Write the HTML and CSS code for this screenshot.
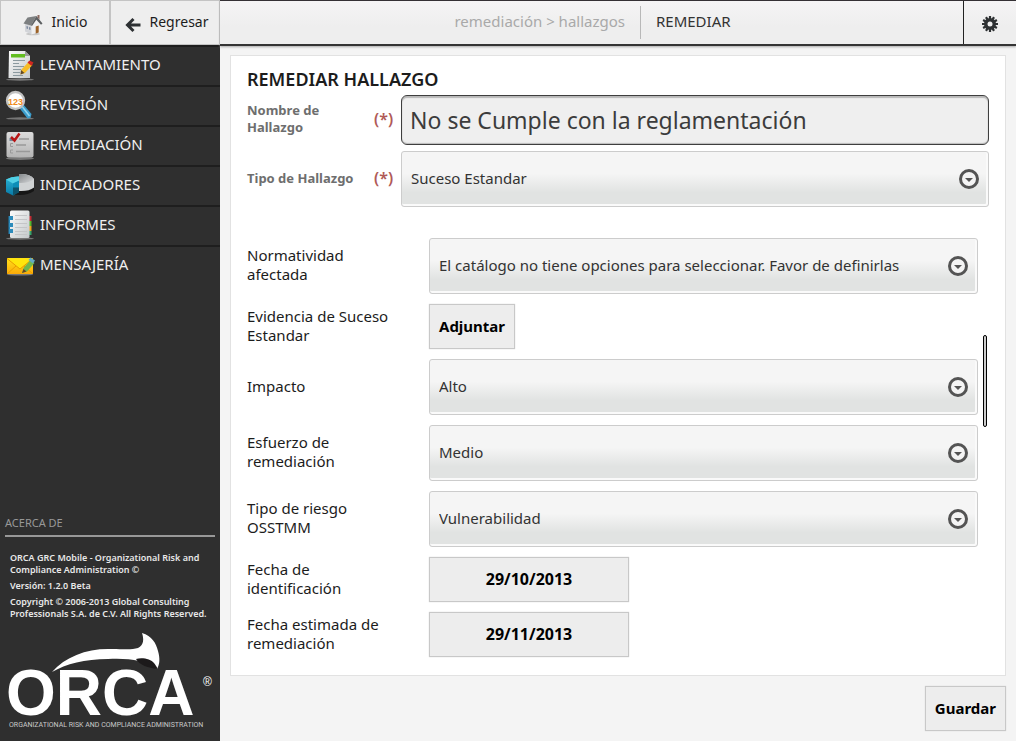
FILE: index.html
```html
<!DOCTYPE html>
<html lang="es">
<head>
<meta charset="utf-8">
<meta name="viewport" content="width=device-width, initial-scale=1">
<title>ORCA GRC Mobile - Remediar hallazgo</title>
<link rel="stylesheet" href="styles.css">
</head>
<body>
<svg class="defs" width="0" height="0" aria-hidden="true">
  <defs>
    <linearGradient id="paper" x1="0" y1="0" x2="1" y2="1"><stop offset="0" stop-color="#fbfbfb"/><stop offset="1" stop-color="#c4c8ca"/></linearGradient>
    <linearGradient id="board" x1="0" y1="0" x2="0" y2="1"><stop offset="0" stop-color="#dcdcdc"/><stop offset="1" stop-color="#b4b4b4"/></linearGradient>
    <linearGradient id="blue" x1="0" y1="0" x2="0" y2="1"><stop offset="0" stop-color="#2cb4d4"/><stop offset="1" stop-color="#087aa8"/></linearGradient>
    <linearGradient id="silver" x1="0" y1="0" x2="1" y2="1"><stop offset="0" stop-color="#85898c"/><stop offset="1" stop-color="#d8dadb"/></linearGradient>
    <linearGradient id="gold" x1="0" y1="0" x2="0" y2="1"><stop offset="0" stop-color="#ffe21a"/><stop offset="1" stop-color="#fbaa09"/></linearGradient>
    <symbol id="chevron" viewBox="0 0 20 20"><circle cx="10" cy="10" r="8.5" fill="#f4f4f4" stroke="#545454" stroke-width="3"/><path d="M6 9h8l-4 4z" fill="#545454"/></symbol>
  </defs>
</svg>
<div class="app">
  <aside class="sidebar">
    <div class="top-buttons">
      <button type="button" class="top-button">
        <svg width="20" height="22" viewBox="0 0 20 22" aria-hidden="true"><ellipse cx="10" cy="20" rx="7" ry="1.3" fill="#c6c6c6"/><path d="M2 9v8.500l7 3V10z" fill="#d2d4d8"/><path d="M8.500 12l5-7 4.500 6v6.500l-9.500 3z" fill="#f0f0f0"/><path d="M.5 9.500L4.500 3.500l9-1.500L8 11.500z" fill="#7c7f80"/><path d="M13.500 2l6 7.500-1.500 1.300-4.700-5L9 12l-1-.7z" fill="#5d6062"/><path d="M12.700 12.500l3-1v7l-3 1z" fill="#9c6228"/><path d="M3.500 12l1.500.5v2.500l-1.500-.5zM6 13l1.500.5V16L6 15.500z" fill="#7e8ba0"/><path d="M14.500 1h2v4.500l-2-2z" fill="#8a6a60"/></svg>
        <span>Inicio</span>
      </button>
      <button type="button" class="top-button">
        <svg width="16" height="16" viewBox="0 0 16 16" aria-hidden="true"><path d="M8.500 2l-6 6 6 6M3 8h12.500" fill="none" stroke="#2d3033" stroke-width="3"/></svg>
        <span>Regresar</span>
      </button>
    </div>
    <nav class="menu" aria-label="Principal">
      <a href="#levantamiento">
        <svg viewBox="0 0 30 32" aria-hidden="true"><ellipse cx="15" cy="29.500" rx="14" ry="1.200" fill="#777"/><path d="M4 1h16l5 5v22H3.500z" fill="url(#paper)"/><path d="M20 1v5h5z" fill="#999"/><path d="M6 4h14v3.500H6z" fill="#62bd20"/><path d="M8 10.500h12M8 13.500h6M8 16.500h11M8 19.500h8M8 22.500h7M8 25.500h10" stroke="#8b999f"/><path d="M15.500 24.500l1-5 7-7.500 4 3-7.500 8z" fill="#f7bd27"/><path d="M22.500 12.500l2-2 4 2-2 3.500z" fill="#cf2721"/><path d="M16 20l3.500 3-4 1.500z" fill="#5d472c"/></svg>
        <span>LEVANTAMIENTO</span></a>
      <a href="#revision">
        <svg viewBox="0 0 30 32" aria-hidden="true"><ellipse cx="15" cy="28.500" rx="14" ry="1.200" fill="#777"/><path d="M14 17.500l4-3.500 8.500 10-1 4-3 .5z" fill="#3b9ccb"/><path d="M17.500 17l7 9" stroke="#93d4ee" stroke-width="1.500"/><circle cx="10.500" cy="10.500" r="8.500" fill="#fff" stroke="#c2c2c2" stroke-width="2.400"/><text x="3" y="14.500" class="digits">123</text></svg>
        <span>REVISIÓN</span></a>
      <a href="#remediacion">
        <svg viewBox="0 0 30 32" aria-hidden="true"><ellipse cx="15" cy="28.500" rx="14" ry="1.500" fill="#777"/><rect x="1.500" y="2" width="27" height="25.500" rx="2" fill="url(#board)"/><path d="M14 9h10M11 15h10M11 21.500h14" stroke="#999" stroke-width="1.500"/><path d="M8 13.500H5.500v3H8M8 20H5.500v3H8" fill="none" stroke="#999"/><path d="M4.500 8H10v3H4.500z" fill="#72899b"/><path d="M6 7l3.500 3.500L14.500 3.500" fill="none" stroke="#b91515" stroke-width="2.500"/></svg>
        <span>REMEDIACIÓN</span></a>
      <a href="#indicadores">
        <svg viewBox="0 0 30 32" aria-hidden="true"><path d="M7 21l22-3v3q-9 6-22 3z" fill="#161616"/><path d="M1 9.500q6-3.500 13.500-3v14L8 25.500 1 22z" fill="url(#blue)"/><path d="M1 9.500q6-3.500 13.500-3v4L8 13.500z" fill="#50cfe5"/><path d="M8 13.500l6.500-3v10L8 25.500z" fill="#0c8db7"/><path d="M14 4q11-.5 15 5v8.500q-5 4-15 3.500z" fill="#d0d3d4"/><path d="M14 4q11-.5 15 5-5 4.500-15 4z" fill="url(#silver)"/><path d="M8 17.500h6v5l-6 3z" fill="#0d536b"/></svg>
        <span>INDICADORES</span></a>
      <a href="#informes">
        <svg viewBox="0 0 30 32" aria-hidden="true"><ellipse cx="15" cy="28.500" rx="14" ry="1.200" fill="#777"/><path d="M24 6h2.500v5H24z" fill="#c12b32"/><path d="M24 11h2.500v5H24z" fill="#56b62c"/><path d="M24 16h2.500v5H24z" fill="#efa21c"/><path d="M24 21h2.500v4H24z" fill="#35a46a"/><path d="M3.500 6H8v18H3.500z" fill="#2382b4"/><rect x="5" y=".5" width="19.500" height="27.500" rx="1.500" fill="url(#paper)"/><path d="M10 5.500h12M10 9.500h12M10 13.500h12M10 17.500h12M10 21.500h12M10 24.500h12" stroke="#c4c5c7"/><path d="M4 6h4v4H4zM4 13h4v4H4zM4 19h4v4H4z" fill="#2d8bbb"/></svg>
        <span>INFORMES</span></a>
      <a href="#mensajeria">
        <svg viewBox="0 0 30 32" aria-hidden="true"><ellipse cx="15" cy="24.500" rx="13" ry="1" fill="#777"/><rect x="2" y="8" width="26" height="16" rx="1" fill="url(#gold)"/><path d="M2 8.500h26L15 19z" fill="#ffe60c"/><path d="M2 24l9-8M28 24l-9-8M2 8.500L15 19 28 8.500" stroke="#e99c00" fill="none"/><path d="M17 23l1.500-5 7-8 4 3-7.500 8.500z" fill="#70b84d"/><path d="M23.500 10l2-2.500 4.500 3-2 3z" fill="#62a9c4"/><path d="M17 23l1.500-4 3 2.500z" fill="#6a4625"/></svg>
        <span>MENSAJERÍA</span></a>
    </nav>
    <section class="about">
      <h2>ACERCA DE</h2>
      <div class="about-text">
        <p>ORCA GRC Mobile - Organizational Risk and Compliance Administration ©</p>
        <p>Versión: 1.2.0 Beta</p>
        <p>Copyright © 2006-2013 Global Consulting Professionals S.A. de C.V. All Rights Reserved.</p>
      </div>
      <svg class="logo" viewBox="0 0 220 110" role="img" aria-label="ORCA">
        <path d="M52 41C66 25 88 17 112 18C123 18 132 19 138 17C144 14 144 8 142 2C152 5 156 12 158 20C160 27 160 33 157 38C145 29 128 27 108 28C85 28 66 33 52 41Z" fill="#fff"/>
        <path d="M136 28C142 26 151 28 154 32C156 35 158 37 157 38C149 37 139 34 136 28Z" fill="#1c1a1b"/>
        <text x="6" y="84" class="wordmark">ORCA</text>
        <text x="203" y="55" class="registered">®</text>
        <text x="9" y="96" class="tagline">ORGANIZATIONAL RISK AND COMPLIANCE ADMINISTRATION</text>
      </svg>
    </section>
  </aside>
  <div class="content">
    <header class="bar">
      <span class="crumbs">remediación &gt; hallazgos</span>
      <h1>REMEDIAR</h1>
      <button type="button" class="settings" aria-label="Configuración">
        <svg width="18" height="18" viewBox="-9 -9 18 18" aria-hidden="true"><g stroke="#2e3133" stroke-width="2.200"><path d="M0-8V8M-8 0H8M-4-6.900L4 6.900M-6.900-4L6.900 4M-6.900 4L6.900-4M-4 6.900L4-6.900"/></g><circle r="6" fill="#2e3133"/><circle r="2.500" fill="#efefef"/></svg>
      </button>
    </header>
    <form class="main">
      <div class="panel">
        <h2>REMEDIAR HALLAZGO</h2>
        <div class="required">
          <label for="nombre">Nombre de Hallazgo</label><span class="star">(*)</span>
          <input id="nombre" class="name" type="text" value="No se Cumple con la reglamentación">
          <label for="tipo">Tipo de Hallazgo</label><span class="star">(*)</span>
          <div class="select"><select id="tipo"><option>Suceso Estandar</option></select><svg aria-hidden="true"><use href="#chevron"/></svg></div>
        </div>
        <div class="details">
          <label for="norma">Normatividad afectada</label>
          <div class="select"><select id="norma"><option>El catálogo no tiene opciones para seleccionar. Favor de definirlas</option></select><svg aria-hidden="true"><use href="#chevron"/></svg></div>
          <label for="evidencia">Evidencia de Suceso Estandar</label>
          <button type="button" id="evidencia" class="button">Adjuntar</button>
          <label for="impacto">Impacto</label>
          <div class="select"><select id="impacto"><option>Alto</option></select><svg aria-hidden="true"><use href="#chevron"/></svg></div>
          <label for="esfuerzo">Esfuerzo de remediación</label>
          <div class="select"><select id="esfuerzo"><option>Medio</option></select><svg aria-hidden="true"><use href="#chevron"/></svg></div>
          <label for="riesgo">Tipo de riesgo OSSTMM</label>
          <div class="select"><select id="riesgo"><option>Vulnerabilidad</option></select><svg aria-hidden="true"><use href="#chevron"/></svg></div>
          <label for="fecha">Fecha de identificación</label>
          <button type="button" id="fecha" class="button date">29/10/2013</button>
          <label for="estimada">Fecha estimada de remediación</label>
          <button type="button" id="estimada" class="button date">29/11/2013</button>
          <span class="scroll-thumb"></span>
        </div>
      </div>
      <button type="submit" class="button save">Guardar</button>
    </form>
  </div>
</div>
</body>
</html>
```

FILE: styles.css
```css
* { box-sizing: border-box; }
body {
  margin: 0;
  background: #f4f4f4;
  color: #1c1c1c;
  font: 15px/19px "Noto Sans", "Open Sans", sans-serif;
}
button, input, select { font: inherit; color: inherit; }
h1, h2, p { margin: 0; }
.defs { position: absolute; }
.app {
  display: grid;
  grid-template-columns: 220px 1fr;
  min-height: 100vh;
}

/* Sidebar */
.sidebar {
  display: flex;
  flex-direction: column;
  background: #2f2f2f;
}
.top-buttons {
  display: grid;
  grid-template-columns: 1fr 1fr;
  height: 45px;
}
.top-button {
  display: flex;
  align-items: center;
  justify-content: center;
  gap: 9px;
  padding: 0;
  border: 1px solid #c4c4c4;
  background: #eee;
  font-size: 14px;
}
.top-button svg { margin-top: 4px; }
.top-button span { padding-bottom: 2px; }
.top-button + .top-button { padding-left: 3px; }
.menu a {
  display: flex;
  align-items: center;
  gap: 5px;
  height: 40px;
  padding-left: 5px;
  border-top: 2px solid #1e1e1e;
  color: #efefef;
  text-decoration: none;
}
.menu svg { width: 30px; height: 32px; }
.menu span { padding-bottom: 4px; }
.digits { fill: #ee8b1c; font: bold 9px "Liberation Sans", sans-serif; }
.about { margin-top: auto; }
.about h2 {
  margin: 0 5px;
  padding-bottom: 3px;
  border-bottom: 2px solid #989898;
  color: #989898;
  font-size: 11px;
  font-weight: 400;
}
.about-text {
  display: grid;
  gap: 4px;
  padding: 15px 5px 0 10px;
  color: #e8e8e8;
  font-size: 9px;
  font-weight: 600;
  line-height: 12px;
}
.logo { display: block; width: 100%; margin-top: 11px; }
.logo text { fill: #fff; }
.logo .wordmark { font: bold 64px "Liberation Sans", sans-serif; }
.logo .registered { font: 12px "Liberation Sans", sans-serif; }
.logo .tagline { fill: #c9c9c9; font: 7px Roboto, sans-serif; }

/* Header */
.content { display: flex; flex-direction: column; min-width: 0; }
.bar {
  display: grid;
  grid-template-columns: 421px 1fr 53px;
  height: 46px;
  border-top: 1px solid #343034;
  border-bottom: 2px solid #343434;
  background: linear-gradient(#f5f4f5, #eee 60%);
  box-shadow: 0 1px 2px #aaa;
}
.crumbs {
  margin: 5px 0;
  padding: 6px 15px 0 0;
  border-right: 1px solid #b8b8b8;
  color: #a9a9a9;
  text-align: right;
}
.bar h1 {
  padding: 11px 15px;
  color: #333;
  font-size: 15px;
  font-weight: 400;
}
.settings {
  display: grid;
  place-items: center;
  padding: 3px 0 0;
  border: 0;
  border-left: 1px solid #222;
  background: none;
}

/* Form */
.main {
  display: flex;
  flex-direction: column;
  gap: 10px;
  padding: 9px 10px 10px;
}
.panel {
  padding: 12px 16px 18px;
  border: 1px solid #e2e2e2;
  background: #fff;
}
.panel h2 {
  margin-bottom: 5px;
  font-size: 18px;
  font-weight: 600;
  line-height: 22px;
}
.panel label { padding-bottom: 2px; }
.required {
  display: grid;
  grid-template-columns: 127px 27px 1fr;
  row-gap: 6px;
  align-items: center;
}
.required label {
  padding-right: 10px;
  color: #6e6e6e;
  font-size: 13px;
  font-weight: 700;
  line-height: 17px;
}
.star { padding-bottom: 2px; color: #b05a57; font-size: 16px; font-weight: 600; }
.name {
  width: 100%;
  height: 50px;
  padding: 0 8px;
  border: 1px solid #3f3f3f;
  border-radius: 6px;
  background: #efefef;
  box-shadow: inset 0 2px 1px #b9b9b9, inset 0 -1px 1px #bbb;
  color: #3c3c3c;
  font-size: 23px;
}
.select { position: relative; }
.select select {
  display: block;
  width: 100%;
  height: 56px;
  padding: 0 44px 2px 9px;
  border: 1px solid #ccc;
  border-radius: 3px;
  background: linear-gradient(#f5f5f5 40%, #e1e3e2 75%);
  box-shadow: inset -1px -1px 0 1px #fafafa;
  color: #333;
  appearance: none;
}
.select svg {
  position: absolute;
  top: 18px;
  right: 10px;
  width: 20px;
  height: 20px;
  pointer-events: none;
}
.details {
  position: relative;
  display: grid;
  grid-template-columns: 152px 1fr;
  gap: 10px 30px;
  align-items: center;
  padding: 31px 11px 0 0;
}
.button {
  justify-self: start;
  height: 45px;
  padding: 0 9px;
  border: 1px solid #c8c8c8;
  background: #ededed;
  box-shadow: 0 0 1px #ccc;
  color: #000;
  font-weight: 700;
}
.date { width: 200px; font-size: 16px; }
.save { align-self: flex-end; }
.scroll-thumb {
  position: absolute;
  top: 128px;
  right: 2px;
  width: 4px;
  height: 92px;
  border: 1px solid #000;
  border-radius: 2px;
  background: #ccc;
}
```
